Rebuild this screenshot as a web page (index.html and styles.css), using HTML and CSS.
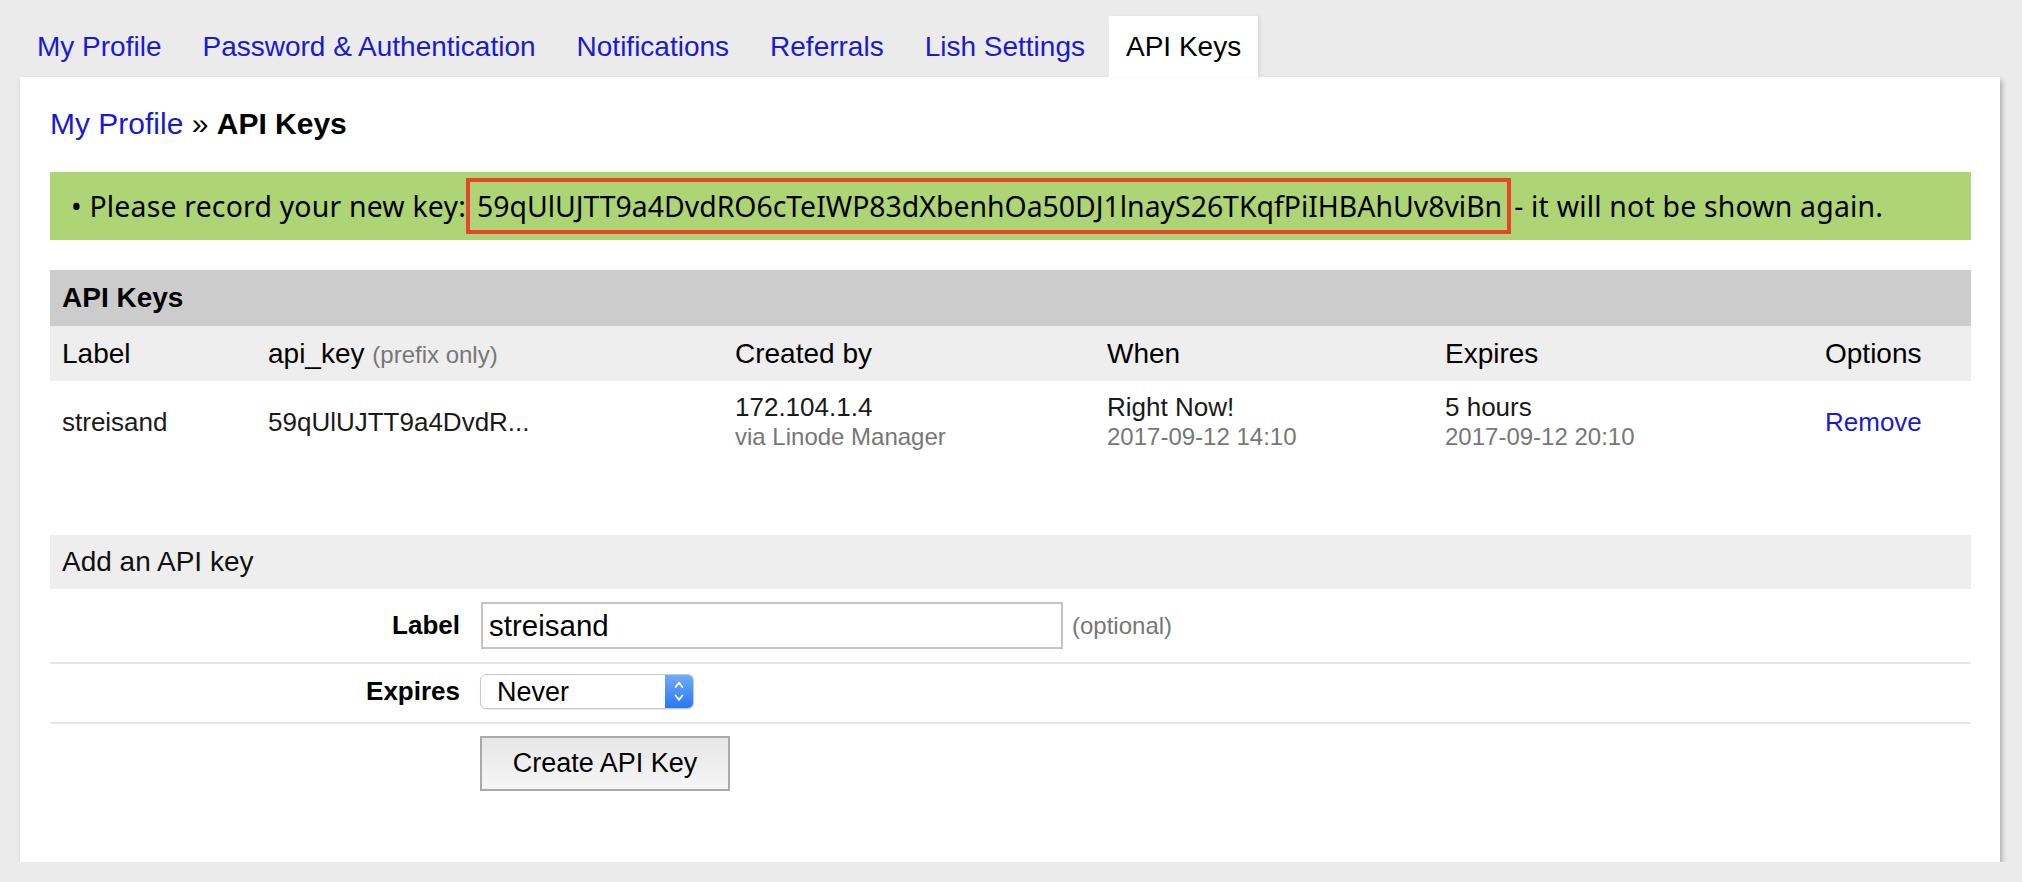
FILE: index.html
```html
<!DOCTYPE html>
<html lang="en">
<head>
<meta charset="utf-8">
<title>API Keys</title>
<link rel="stylesheet" href="styles.css">
</head>
<body>
<nav class="tabs">
  <a class="tab" href="#">My Profile</a>
  <a class="tab" href="#">Password &amp; Authentication</a>
  <a class="tab" href="#">Notifications</a>
  <a class="tab" href="#">Referrals</a>
  <a class="tab" href="#">Lish Settings</a>
  <span class="tab active">API Keys</span>
</nav>
<main class="panel">
  <h1 class="crumb"><a href="#">My Profile</a> » <strong>API Keys</strong></h1>

  <div class="notice">
    <span class="notice-text">• Please record your new key:</span><span class="key">59qUlUJTT9a4DvdRO6cTeIWP83dXbenhOa50DJ1lnayS26TKqfPiIHBAhUv8viBn</span><span class="notice-text">- it will not be shown again.</span>
  </div>

  <section class="keys">
    <div class="keys-title">API Keys</div>
    <div class="grid head">
      <div class="cell">Label</div>
      <div class="cell">api_key <span class="hint">(prefix only)</span></div>
      <div class="cell">Created by</div>
      <div class="cell">When</div>
      <div class="cell">Expires</div>
      <div class="cell">Options</div>
    </div>
    <div class="grid row">
      <div class="cell">streisand</div>
      <div class="cell">59qUlUJTT9a4DvdR...</div>
      <div class="cell">172.104.1.4<span class="sub">via Linode Manager</span></div>
      <div class="cell">Right Now!<span class="sub">2017-09-12 14:10</span></div>
      <div class="cell">5 hours<span class="sub">2017-09-12 20:10</span></div>
      <div class="cell"><a class="remove" href="#">Remove</a></div>
    </div>
  </section>

  <section class="add">
    <div class="add-title">Add an API key</div>
    <div class="frow frow-label">
      <label class="flabel" for="label">Label</label>
      <div class="fctl">
        <input class="input" id="label" type="text" value="streisand">
        <span class="opt">(optional)</span>
      </div>
    </div>
    <div class="frow frow-expires">
      <label class="flabel" for="expires">Expires</label>
      <div class="fctl">
        <div class="select">
          <select id="expires"><option>Never</option></select>
          <span class="stepper">
            <svg width="10" height="33" viewBox="0 0 10 33" fill="none" stroke="#fff" stroke-width="1.8" stroke-linecap="round" stroke-linejoin="round"><path d="M1.6 12 L5 7.6 L8.4 12"/><path d="M1.6 20.5 L5 24.9 L8.4 20.5"/></svg>
          </span>
        </div>
      </div>
    </div>
    <div class="frow frow-submit">
      <span class="flabel"></span>
      <div class="fctl"><button class="btn" type="button">Create API Key</button></div>
    </div>
  </section>
</main>
</body>
</html>
```

FILE: styles.css
```css
html, body {
  margin: 0;
  padding: 0;
}
body {
  background: #ebebeb;
  font-family: "Liberation Sans", Arial, sans-serif;
  color: #000;
}

/* Tabs */
.tabs {
  display: flex;
  gap: 7px;
  padding: 16px 0 0 20px;
}
.tab {
  display: block;
  padding: 0 17px;
  height: 61px;
  line-height: 61px;
  font-size: 28px;
  color: #1a1ad0;
  text-decoration: none;
}
.tab.active {
  background: #fff;
  color: #000;
  box-shadow: 2px 0 3px rgba(0, 0, 0, 0.08);
}

/* Panel */
.panel {
  margin: 0 22px 0 20px;
  background: #fff;
  padding: 29px 29px 71px 30px;
  box-shadow: 2px 3px 5px rgba(0, 0, 0, 0.28);
}
.crumb {
  margin: 0 0 30px;
  font-size: 30px;
  line-height: 36px;
  font-weight: normal;
}
.crumb a {
  color: #1a1ad0;
  text-decoration: none;
}

/* Notice */
.notice {
  display: flex;
  align-items: center;
  height: 68px;
  background: #add475;
  padding-left: 21px;
  font-family: "Noto Sans", "DejaVu Sans", sans-serif;
  font-size: 28.4px;
  color: #000;
  margin-bottom: 30px;
  white-space: pre;
}
.notice-text {
  line-height: 36px;
  letter-spacing: 0.2px;
}
.key {
  border: 4px solid #e5452d;
  line-height: 48px;
  padding: 0 5px 0 7px;
  margin-right: 3px;
}

/* Table */
.keys-title {
  background: #ccc;
  height: 56px;
  line-height: 56px;
  padding-left: 12px;
  font-size: 28px;
  font-weight: bold;
}
.grid {
  display: grid;
  grid-template-columns: 206px 467px 372px 338px 380px 1fr;
  align-items: center;
}
.cell {
  padding-left: 12px;
}
.head {
  background: #eee;
  height: 55px;
  font-size: 28px;
}
.hint {
  font-size: 24px;
  color: #777;
}
.row {
  padding: 11px 0;
  font-size: 26px;
  line-height: 30px;
  color: #1a1a1a;
}
.sub {
  display: block;
  font-size: 24px;
  color: #777;
}
.remove {
  color: #1a1ad0;
  text-decoration: none;
}

/* Add form */
.add {
  margin-top: 72px;
}
.add-title {
  background: #eee;
  height: 54px;
  line-height: 54px;
  padding-left: 12px;
  font-size: 28px;
  color: #111;
}
.frow {
  display: grid;
  grid-template-columns: 410px 1fr;
  column-gap: 20px;
  align-items: center;
  border-bottom: 2px solid #e6e6e6;
}
.frow-label {
  padding: 13px 0;
}
.frow-expires {
  padding: 10px 0 13px;
}
.frow-submit {
  padding-top: 12px;
  border-bottom: 0;
}
.flabel {
  text-align: right;
  font-weight: bold;
  font-size: 26px;
}
.fctl {
  display: flex;
  align-items: center;
  gap: 9px;
}
.input {
  width: 582px;
  height: 47px;
  box-sizing: border-box;
  border: 2px solid #c4c4c4;
  padding: 0 6px;
  margin: 0 0 0 1px;
  font-family: "Liberation Sans", Arial, sans-serif;
  font-size: 29.5px;
  color: #000;
  outline: none;
}
.opt {
  font-size: 24px;
  color: #777;
}
.select {
  display: inline-flex;
  width: 214px;
  height: 35px;
  box-sizing: border-box;
  border: 1px solid #c8c8c8;
  border-radius: 6px;
  overflow: hidden;
  background: #fff;
  box-shadow: 0 1px 1px rgba(0, 0, 0, 0.08);
}
.select select {
  appearance: none;
  -webkit-appearance: none;
  flex: 1;
  min-width: 0;
  border: 0;
  background: transparent;
  padding: 0 0 0 16px;
  margin: 0;
  font-family: "Liberation Sans", Arial, sans-serif;
  font-size: 27px;
  color: #000;
  outline: none;
}
.stepper {
  width: 28px;
  display: flex;
  align-items: center;
  justify-content: center;
  background: linear-gradient(#6eacf8, #2a78f0);
}
.btn {
  width: 250px;
  height: 55px;
  box-sizing: border-box;
  border: 2px solid #a9a9a9;
  border-radius: 0;
  background: linear-gradient(#e6e6e6, #f6f6f6);
  font-family: "Liberation Sans", Arial, sans-serif;
  font-size: 27px;
  color: #000;
  padding: 0;
}
```
